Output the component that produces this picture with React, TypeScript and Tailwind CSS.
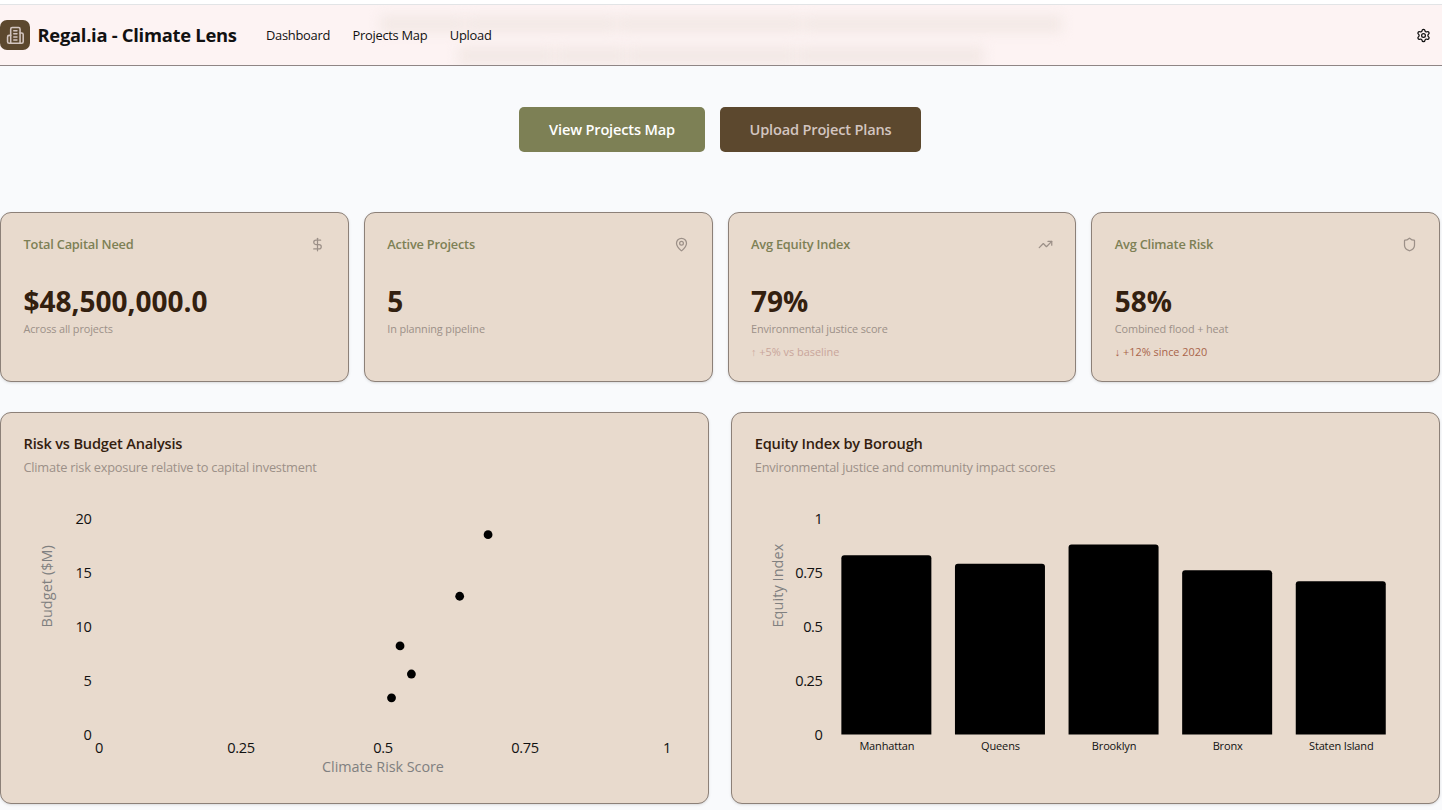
import type { ReactNode } from "react";
import { DollarSign, MapPin, Settings, Shield, TrendingUp } from "lucide-react";

const stats = [
  {
    title: "Total Capital Need",
    value: "$48,500,000.0",
    note: "Across all projects",
    icon: DollarSign,
  },
  {
    title: "Active Projects",
    value: "5",
    note: "In planning pipeline",
    icon: MapPin,
  },
  {
    title: "Avg Equity Index",
    value: "79%",
    note: "Environmental justice score",
    trend: "↑ +5% vs baseline",
    trendColor: "text-[#c9a59b]",
    icon: TrendingUp,
  },
  {
    title: "Avg Climate Risk",
    value: "58%",
    note: "Combined flood + heat",
    trend: "↓ +12% since 2020",
    trendColor: "text-[#a8644a]",
    icon: Shield,
  },
];

const projects = [
  { risk: 0.685, budget: 18.5 },
  { risk: 0.635, budget: 12.8 },
  { risk: 0.53, budget: 8.2 },
  { risk: 0.55, budget: 5.6 },
  { risk: 0.515, budget: 3.4 },
];

const boroughs = [
  { name: "Manhattan", equity: 0.83 },
  { name: "Queens", equity: 0.79 },
  { name: "Brooklyn", equity: 0.88 },
  { name: "Bronx", equity: 0.76 },
  { name: "Staten Island", equity: 0.71 },
];

// Plot area shared by both charts
const LEFT = 75;
const TOP = 19.5;
const WIDTH = 568;
const HEIGHT = 216;

function BuildingIcon() {
  return (
    <svg
      viewBox="0 0 24 24"
      fill="none"
      stroke="currentColor"
      strokeWidth={2}
      strokeLinecap="round"
      strokeLinejoin="round"
      className="size-[18.75px] text-[#d3c5c0]"
    >
      <path d="M6 22V4a2 2 0 0 1 2-2h8a2 2 0 0 1 2 2v18Z" />
      <path d="M6 12H4a2 2 0 0 0-2 2v6a2 2 0 0 0 2 2h2" />
      <path d="M18 9h2a2 2 0 0 1 2 2v9a2 2 0 0 1-2 2h-2" />
      <path d="M10 6h4M10 10h4M10 14h4M10 18h4" />
    </svg>
  );
}

function YAxis({ ticks, label }: { ticks: string[]; label: string }) {
  return (
    <>
      {ticks.map((tick, i) => (
        <text
          key={tick}
          x={LEFT - 7.5}
          y={TOP + HEIGHT - (i * HEIGHT) / 4 + 5}
          textAnchor="end"
          className="fill-[#111] text-[14.6px] tracking-[-0.4px]"
        >
          {tick}
        </text>
      ))}
      <text
        transform="translate(28 128.5) rotate(-90)"
        className="fill-[#808080] text-[14.4px] tracking-[0.1px]"
      >
        {label}
      </text>
    </>
  );
}

function ScatterPlot() {
  return (
    <svg className="block h-[281.5px] w-full">
      <YAxis ticks={["0", "5", "10", "15", "20"]} label="Budget ($M)" />
      {["0", "0.25", "0.5", "0.75", "1"].map((tick, i) => (
        <text
          key={tick}
          x={LEFT + (i * WIDTH) / 4}
          y={TOP + HEIGHT + 18.5}
          textAnchor="middle"
          className="fill-[#111] text-[14.6px] tracking-[-0.4px]"
        >
          {tick}
        </text>
      ))}
      <text
        x={LEFT + WIDTH / 2}
        y={TOP + HEIGHT + 37.5}
        textAnchor="middle"
        className="fill-[#808080] text-[14.4px] tracking-[-0.05px]"
      >
        Climate Risk Score
      </text>
      {projects.map((p) => (
        <circle
          key={p.risk}
          cx={LEFT + p.risk * WIDTH}
          cy={TOP + HEIGHT - (p.budget / 20) * HEIGHT}
          r={4.4}
        />
      ))}
    </svg>
  );
}

function BarPlot() {
  const band = WIDTH / boroughs.length;
  return (
    <svg className="block h-[281.5px] w-full">
      <YAxis ticks={["0", "0.25", "0.5", "0.75", "1"]} label="Equity Index" />
      {boroughs.map((b, i) => {
        const x = LEFT + i * band + band * 0.1;
        const y = TOP + HEIGHT - b.equity * HEIGHT;
        const bottom = TOP + HEIGHT;
        return (
          <g key={b.name}>
            <path
              d={`M${x} ${bottom}V${y + 3}a3 3 0 0 1 3 -3h84a3 3 0 0 1 3 3V${bottom}Z`}
            />
            <text
              x={x + 45.5}
              y={bottom + 15.5}
              textAnchor="middle"
              className="fill-[#111] text-[11px] tracking-[-0.15px]"
            >
              {b.name}
            </text>
          </g>
        );
      })}
    </svg>
  );
}

function ChartCard({
  title,
  description,
  children,
}: {
  title: string;
  description: string;
  children: ReactNode;
}) {
  return (
    <section className="rounded-[11px] border border-[#8c8078] bg-[#e8dacd] p-[22.5px] shadow-sm">
      <h3 className="text-[14.6px] leading-[15px] font-semibold tracking-[-0.18px] text-[#33200f]">
        {title}
      </h3>
      <p className="mt-[5px] mb-[21px] text-[12.8px] leading-[22px] tracking-[-0.22px] text-[#9c9088]">
        {description}
      </p>
      {children}
    </section>
  );
}

export default function App() {
  return (
    <div className="h-[810px] overflow-hidden bg-[#f9fafc] font-['Open_Sans','Noto_Sans',sans-serif] text-[#111]">
      <div className="h-[5px] border-b border-[#e2e4e6] bg-white" />

      <header className="relative flex h-[61px] items-center overflow-hidden border-b border-[#8f8585] bg-[#fdf3f3] pr-[11px]">
        {/* Hero copy showing faintly through the frosted bar */}
        <div className="absolute inset-x-0 top-[10px] flex flex-col items-center gap-[13px] blur-[6px]">
          <div className="flex gap-0.5">
            <div className="h-[18px] w-[84px] bg-[#f3e9e6]" />
            <div className="h-[18px] w-[150px] bg-[#f3e9e6]" />
            <div className="h-[18px] w-[184px] bg-[#f3e9e6]" />
            <div className="h-[18px] w-[258px] bg-[#f3e9e6]" />
          </div>
          <div className="flex gap-0.5">
            <div className="h-5 w-24 bg-[#f3e9e6]" />
            <div className="h-5 w-[70px] bg-[#f3e9e6]" />
            <div className="h-5 w-[168px] bg-[#f3e9e6]" />
            <div className="h-5 w-[186px] bg-[#f3e9e6]" />
          </div>
        </div>

        <div className="relative flex size-[30px] items-center justify-center rounded-[7px] bg-[#5c482e]">
          <BuildingIcon />
        </div>
        <h1 className="relative ml-[7.5px] w-[228.5px] pb-px text-[18.4px] font-bold tracking-[-0.29px] whitespace-nowrap">
          Regal.ia - Climate Lens
        </h1>
        <nav className="relative flex gap-[22.5px] pt-px text-[12.9px] tracking-[-0.28px]">
          <a>Dashboard</a>
          <a>Projects Map</a>
          <a>Upload</a>
        </nav>
        <Settings className="relative ml-auto size-[15px]" />
      </header>

      <main className="w-[1440px]">
        <div className="mt-[41px] flex justify-center gap-[15px] text-[14.6px] font-semibold tracking-[-0.18px]">
          <button className="h-[45px] w-[186px] rounded-[5px] bg-[#7d8055] text-white">
            View Projects Map
          </button>
          <button className="h-[45px] w-[201px] rounded-[5px] bg-[#5c482e] text-[#d3c5c0]">
            Upload Project Plans
          </button>
        </div>

        <div className="mt-[60px] grid grid-cols-4 gap-[15px]">
          {stats.map(({ title, value, note, trend, trendColor, icon: Icon }) => (
            <section
              key={title}
              className="h-[170px] rounded-[11px] border border-[#8c8078] bg-[#e8dacd] p-[22.5px] shadow-sm"
            >
              <div className="flex items-center justify-between">
                <h3 className="pb-px text-[12.8px] leading-[17px] font-semibold tracking-[-0.2px] text-[#7d8055]">
                  {title}
                </h3>
                <Icon className="size-[15px] text-[#9c9088]" />
              </div>
              <div className="mt-[30.5px] text-[28px] leading-[34px] font-bold text-[#33200f]">
                {value}
              </div>
              <p className="mt-[2.5px] text-[10.9px] leading-[15px] tracking-[-0.12px] text-[#9c9088]">
                {note}
              </p>
              {trend && (
                <p className={`mt-2 text-[10.9px] leading-[15px] ${trendColor}`}>{trend}</p>
              )}
            </section>
          ))}
        </div>

        <div className="mt-[30px] grid grid-cols-2 gap-[22.5px]">
          <ChartCard
            title="Risk vs Budget Analysis"
            description="Climate risk exposure relative to capital investment"
          >
            <ScatterPlot />
          </ChartCard>
          <ChartCard
            title="Equity Index by Borough"
            description="Environmental justice and community impact scores"
          >
            <BarPlot />
          </ChartCard>
        </div>
      </main>
    </div>
  );
}
